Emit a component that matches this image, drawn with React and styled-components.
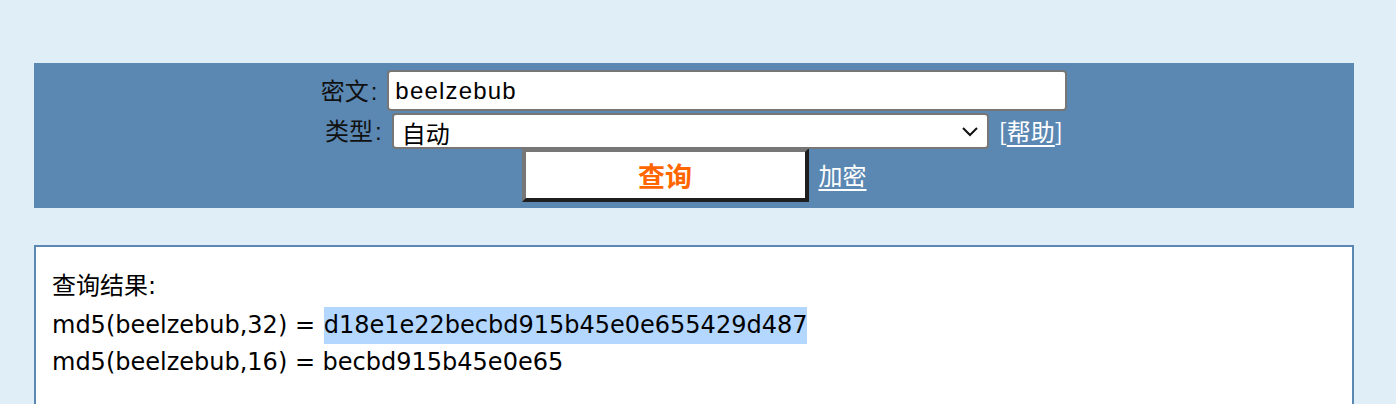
import React from "react";
import styled, { createGlobalStyle } from "styled-components";

const Global = createGlobalStyle`
  html, body {
    margin: 0;
    padding: 0;
    background: #e0eef7;
  }
  body {
    font-family: "Liberation Sans", "Noto Sans CJK SC", sans-serif;
    color: #000;
  }
`;

const Page = styled.div`
  width: 1320px;
  margin: 0 0 0 34px;
  padding-top: 63px;
  display: flex;
  flex-direction: column;
  gap: 37px;
`;

const Panel = styled.form`
  background: #5b88b2;
  height: 145px;
  box-sizing: border-box;
  padding-top: 7px;
  display: flex;
  flex-direction: column;
  align-items: stretch;
  margin: 0;
`;

const Row = styled.div`
  display: flex;
  flex-shrink: 0;
  justify-content: center;
  align-items: center;
  gap: 10px;
  height: ${(p) => p.$h}px;
  margin-top: ${(p) => p.$mt || 0}px;
`;

const Label = styled.span`
  font-family: "Noto Sans CJK SC", sans-serif;
  font-size: 24px;
  line-height: 1;
  color: #111;
`;

const Colon = styled.span`
  font-family: "Liberation Sans", sans-serif;
  margin-left: 2px;
`;

const TextInput = styled.input`
  box-sizing: border-box;
  width: 680px;
  height: 41px;
  border: 2px solid #767676;
  border-radius: 4px;
  background: #fff;
  padding: 0 6px;
  font-family: "Liberation Sans", "Noto Sans CJK SC", sans-serif;
  font-size: 24px;
  letter-spacing: 1.2px;
  color: #000;
  outline: none;
`;

const SelectWrap = styled.div`
  position: relative;
  width: 597px;
  height: 36px;
`;

const Select = styled.select`
  appearance: none;
  -webkit-appearance: none;
  box-sizing: border-box;
  width: 100%;
  height: 100%;
  border: 2px solid #767676;
  border-radius: 4px;
  background: #fff;
  padding: 0 8px;
  font-family: "Noto Sans CJK SC", sans-serif;
  font-size: 24px;
  color: #000;
  outline: none;
`;

const Chevron = styled.svg`
  position: absolute;
  right: 10px;
  top: 13px;
  pointer-events: none;
`;

const LinkText = styled.span`
  font-family: "Noto Sans CJK SC", sans-serif;
  font-size: 24px;
  line-height: 1;
  color: #fff;
`;

const Link = styled.a`
  color: #fff;
  text-decoration: underline;
  text-underline-offset: 4px;
  text-decoration-thickness: 2px;
  cursor: pointer;
`;

const SubmitButton = styled.button`
  box-sizing: border-box;
  width: 287px;
  height: 54px;
  background: #fff;
  border: 4px solid;
  border-color: #777 #1e1e1e #1e1e1e #777;
  font-family: "Noto Sans CJK SC", sans-serif;
  font-weight: bold;
  font-size: 27px;
  color: #ff6600;
  padding: 0;
  cursor: pointer;
`;

const ResultBox = styled.div`
  background: #fff;
  border: 2px solid #5b88b2;
  border-bottom: none;
  height: 200px;
  box-sizing: border-box;
  padding: 21px 16px 0;
  font-family: "DejaVu Sans", "Noto Sans CJK SC", sans-serif;
  font-size: 24px;
  line-height: 37px;
  color: #000;
`;

const Line = styled.div`
  white-space: nowrap;
  height: 37px;
`;

const Title = styled(Line)`
  height: 39px;
`;

const Highlight = styled.span`
  display: inline-block;
  vertical-align: top;
  margin-left: 1px;
  background: #b3d7fe;
  line-height: 37px;
`;

export default function App() {
  return (
    <>
      <Global />
      <Page>
        <Panel onSubmit={(e) => e.preventDefault()}>
          <Row $h={41}>
            <Label>
              密文<Colon>:</Colon>
            </Label>
            <TextInput defaultValue="beelzebub" />
          </Row>
          <Row $h={36} $mt={2}>
            <Label>
              类型<Colon>:</Colon>
            </Label>
            <SelectWrap>
              <Select defaultValue="auto">
                <option value="auto">自动</option>
              </Select>
              <Chevron width="18" height="11" viewBox="0 0 18 11">
                <path d="M2 2 L9 9 L16 2" fill="none" stroke="#111" strokeWidth="2" />
              </Chevron>
            </SelectWrap>
            <LinkText>
              [<Link>帮助</Link>]
            </LinkText>
          </Row>
          <Row $h={54} $mt={-1}>
            <SubmitButton type="submit">查询</SubmitButton>
            <LinkText>
              <Link>加密</Link>
            </LinkText>
          </Row>
        </Panel>
        <ResultBox>
          <Title>查询结果:</Title>
          <Line>
            md5(beelzebub,32) ={" "}
            <Highlight>d18e1e22becbd915b45e0e655429d487</Highlight>
          </Line>
          <Line>md5(beelzebub,16) = becbd915b45e0e65</Line>
        </ResultBox>
      </Page>
    </>
  );
}
